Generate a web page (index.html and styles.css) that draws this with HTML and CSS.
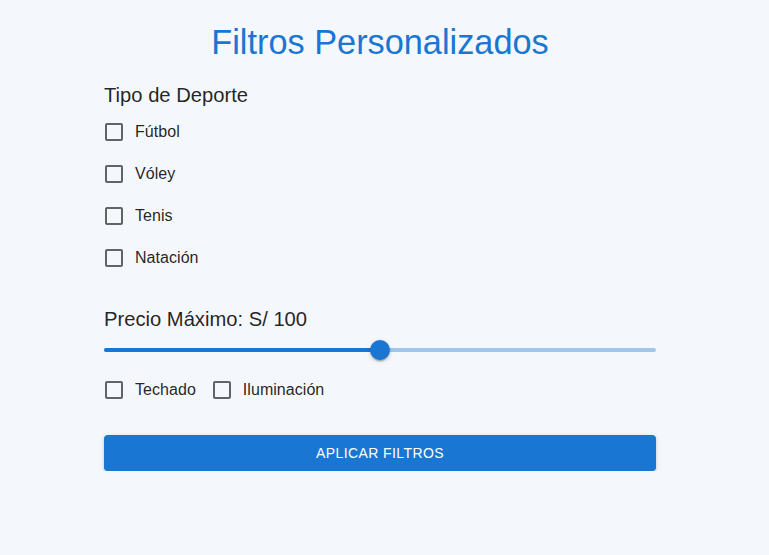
FILE: index.html
```html
<!DOCTYPE html>
<html lang="es">
<head>
<meta charset="utf-8">
<link rel="stylesheet" href="styles.css">
</head>
<body>
<main class="page">
  <h1 class="title">Filtros Personalizados</h1>
  <h2 class="section">Tipo de Deporte</h2>
  <div class="group">
    <label class="check"><span class="box"><svg viewBox="0 0 24 24"><path d="M19 5v14H5V5h14m0-2H5c-1.1 0-2 .9-2 2v14c0 1.1.9 2 2 2h14c1.1 0 2-.9 2-2V5c0-1.1-.9-2-2-2z"/></svg></span><span class="lbl">Fútbol</span></label>
    <label class="check"><span class="box"><svg viewBox="0 0 24 24"><path d="M19 5v14H5V5h14m0-2H5c-1.1 0-2 .9-2 2v14c0 1.1.9 2 2 2h14c1.1 0 2-.9 2-2V5c0-1.1-.9-2-2-2z"/></svg></span><span class="lbl">Vóley</span></label>
    <label class="check"><span class="box"><svg viewBox="0 0 24 24"><path d="M19 5v14H5V5h14m0-2H5c-1.1 0-2 .9-2 2v14c0 1.1.9 2 2 2h14c1.1 0 2-.9 2-2V5c0-1.1-.9-2-2-2z"/></svg></span><span class="lbl">Tenis</span></label>
    <label class="check"><span class="box"><svg viewBox="0 0 24 24"><path d="M19 5v14H5V5h14m0-2H5c-1.1 0-2 .9-2 2v14c0 1.1.9 2 2 2h14c1.1 0 2-.9 2-2V5c0-1.1-.9-2-2-2z"/></svg></span><span class="lbl">Natación</span></label>
  </div>
  <h2 class="section price">Precio Máximo: S/ 100</h2>
  <div class="slider">
    <div class="rail"></div>
    <div class="track" style="width: 50%"></div>
    <div class="thumb" style="left: 50%"></div>
  </div>
  <div class="row">
    <label class="check"><span class="box"><svg viewBox="0 0 24 24"><path d="M19 5v14H5V5h14m0-2H5c-1.1 0-2 .9-2 2v14c0 1.1.9 2 2 2h14c1.1 0 2-.9 2-2V5c0-1.1-.9-2-2-2z"/></svg></span><span class="lbl">Techado</span></label>
    <label class="check"><span class="box"><svg viewBox="0 0 24 24"><path d="M19 5v14H5V5h14m0-2H5c-1.1 0-2 .9-2 2v14c0 1.1.9 2 2 2h14c1.1 0 2-.9 2-2V5c0-1.1-.9-2-2-2z"/></svg></span><span class="lbl">Iluminación</span></label>
  </div>
  <button class="btn">APLICAR FILTROS</button>
</main>
</body>
</html>
```
FILE: styles.css
```css
html, body {
  margin: 0;
  background: #f4f7fb;
  font-family: "Liberation Sans", Arial, sans-serif;
  color: rgba(0, 0, 0, 0.87);
}
.page {
  width: 552px;
  margin-left: 104px;
  padding-top: 21px;
  display: flex;
  flex-direction: column;
}
.title {
  margin: 0 0 16px;
  font-size: 34.3px;
  font-weight: 400;
  line-height: 42px;
  text-align: center;
  color: #1976d2;
}
.section {
  margin: 0;
  font-size: 20.2px;
  font-weight: 400;
  line-height: 32px;
}
.group {
  display: flex;
  flex-direction: column;
  margin-top: 0;
}
.check {
  display: inline-flex;
  align-items: center;
  height: 42px;
  margin-left: -11px;
  margin-right: 16px;
  font-size: 16px;
}
.lbl {
  letter-spacing: 0.05px;
}
.box {
  width: 42px;
  height: 42px;
  padding: 9px;
  box-sizing: border-box;
  display: flex;
}
.box svg {
  width: 24px;
  height: 24px;
  fill: rgba(0, 0, 0, 0.6);
}
.price {
  margin-top: 24px;
}
.slider {
  position: relative;
  height: 4px;
  margin: 13px 0 17px;
}
.rail {
  position: absolute;
  inset: 0;
  border-radius: 2px;
  background: #1976d2;
  opacity: 0.38;
}
.track {
  position: absolute;
  left: 0;
  top: 0;
  bottom: 0;
  border-radius: 2px;
  background: #1976d2;
}
.thumb {
  position: absolute;
  top: 2px;
  width: 20px;
  height: 20px;
  margin: -10px 0 0 -10px;
  border-radius: 50%;
  background: #1976d2;
  box-shadow: 0 3px 1px -2px rgba(0,0,0,0.2), 0 2px 2px 0 rgba(0,0,0,0.14), 0 1px 5px 0 rgba(0,0,0,0.12);
}
.row {
  display: flex;
  height: 42px;
}
.btn {
  margin-top: 24px;
  height: 36px;
  border: 0;
  border-radius: 4px;
  background: #1976d2;
  color: #fff;
  font-family: "Liberation Sans", Arial, sans-serif;
  font-size: 14px;
  letter-spacing: 0.4px;
  box-shadow: 0 3px 1px -2px rgba(0,0,0,0.2), 0 2px 2px 0 rgba(0,0,0,0.14), 0 1px 5px 0 rgba(0,0,0,0.12);
}
```
